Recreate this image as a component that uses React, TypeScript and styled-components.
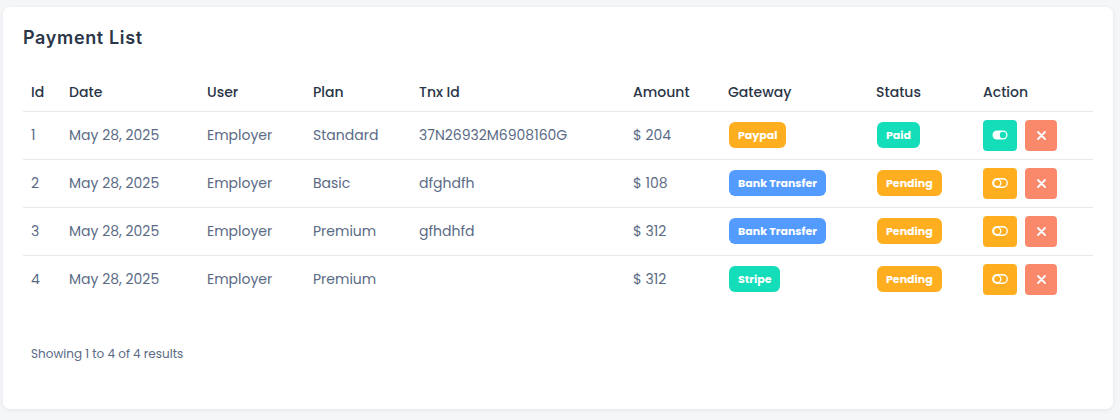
import React from "react";
import styled, { createGlobalStyle } from "styled-components";

const Global = createGlobalStyle`
  html, body { margin: 0; padding: 0; background: #f5f6f8; }
  body { font-family: "Poppins", "Inter", "Noto Sans", sans-serif; }
  * { box-sizing: border-box; }
`;

const Page = styled.div`
  padding: 7px 7px 11px 3px;
`;

const Card = styled.section`
  background: #ffffff;
  border-radius: 7px;
  box-shadow: 0 1px 4px rgba(30, 40, 60, 0.08);
  padding: 17px 20px 46px 20px;
`;

const Title = styled.h2`
  margin: 0 0 21px 0;
  font-family: "Inter", "Noto Sans", sans-serif;
  font-size: 18px;
  line-height: 28px;
  font-weight: 600;
  color: #2a3547;
  letter-spacing: 0.65px;
`;

const Table = styled.table`
  width: 100%;
  border-collapse: collapse;
  table-layout: fixed;
`;

const Col = styled.col<{ $w: number }>`
  width: ${(p) => p.$w}px;
`;

const Th = styled.th`
  text-align: left;
  font-size: 14px;
  font-weight: 500;
  color: #2a3547;
  height: 38px;
  padding: 2px 8px 0 8px;
  border-bottom: 1px solid #e5eaef;
  white-space: nowrap;
`;

const Row = styled.tr<{ $last?: boolean }>`
  & > td {
    border-bottom: ${(p) => (p.$last ? "none" : "1px solid #e5eaef")};
  }
`;

const Td = styled.td`
  height: 48px;
  padding: 1px 8px 0 8px;
  font-size: 14px;
  font-weight: 400;
  color: #5a6a85;
  white-space: nowrap;
  vertical-align: middle;
`;

const BadgeCell = styled(Td)`
  padding: 0 8px 0 9px;
`;

const ActionCell = styled(Td)`
  padding: 0 8px;
`;

const Badge = styled.span<{ $bg: string }>`
  display: inline-flex;
  align-items: center;
  height: 26px;
  padding: 0 9px;
  border-radius: 6px;
  background: ${(p) => p.$bg};
  color: #ffffff;
  font-size: 11px;
  font-weight: 700;
`;

const Actions = styled.div`
  display: flex;
  gap: 8px;
  align-items: center;
`;

const ActionButton = styled.button<{ $bg: string; $w: number }>`
  display: inline-flex;
  align-items: center;
  justify-content: center;
  width: ${(p) => p.$w}px;
  height: 31px;
  border: none;
  border-radius: 4px;
  background: ${(p) => p.$bg};
  padding: 0;
  cursor: pointer;
`;

const Footer = styled.div`
  margin-top: 42px;
  padding-left: 8px;
  font-size: 12px;
  line-height: 18px;
  color: #5a6a85;
`;

const COLORS = {
  orange: "#ffae1f",
  teal: "#13deb9",
  blue: "#539bff",
  coral: "#fa896b",
};

const ToggleOn = () => (
  <svg width="16" height="10" viewBox="0 0 16 10">
    <rect x="0.5" y="0.5" width="15" height="9" rx="4.5" fill="#fff" />
    <circle cx="11" cy="5" r="3.2" fill={COLORS.teal} />
  </svg>
);

const ToggleOff = () => (
  <svg width="16" height="10" viewBox="0 0 16 10" fill="none">
    <rect x="0.75" y="0.75" width="14.5" height="8.5" rx="4.25" stroke="#fff" strokeWidth="1.3" />
    <circle cx="5.2" cy="5" r="3.6" stroke="#fff" strokeWidth="1.3" />
  </svg>
);

const XIcon = () => (
  <svg width="9" height="9" viewBox="0 0 9 9">
    <path d="M1 1 L8 8 M8 1 L1 8" stroke="#fff" strokeWidth="1.8" strokeLinecap="round" />
  </svg>
);

type Payment = {
  id: number;
  date: string;
  user: string;
  plan: string;
  tnx: string;
  amount: string;
  gateway: string;
  gatewayColor: string;
  status: "Paid" | "Pending";
};

const payments: Payment[] = [
  { id: 1, date: "May 28, 2025", user: "Employer", plan: "Standard", tnx: "37N26932M6908160G", amount: "$ 204", gateway: "Paypal", gatewayColor: COLORS.orange, status: "Paid" },
  { id: 2, date: "May 28, 2025", user: "Employer", plan: "Basic", tnx: "dfghdfh", amount: "$ 108", gateway: "Bank Transfer", gatewayColor: COLORS.blue, status: "Pending" },
  { id: 3, date: "May 28, 2025", user: "Employer", plan: "Premium", tnx: "gfhdhfd", amount: "$ 312", gateway: "Bank Transfer", gatewayColor: COLORS.blue, status: "Pending" },
  { id: 4, date: "May 28, 2025", user: "Employer", plan: "Premium", tnx: "", amount: "$ 312", gateway: "Stripe", gatewayColor: COLORS.teal, status: "Pending" },
];

const columns = [
  { label: "Id", w: 38 },
  { label: "Date", w: 138 },
  { label: "User", w: 106 },
  { label: "Plan", w: 106 },
  { label: "Tnx Id", w: 214 },
  { label: "Amount", w: 95 },
  { label: "Gateway", w: 148 },
  { label: "Status", w: 107 },
  { label: "Action", w: 118 },
];

export default function App() {
  return (
    <Page>
      <Global />
      <Card>
        <Title>Payment List</Title>
        <Table>
          <colgroup>
            {columns.map((c) => (
              <Col key={c.label} $w={c.w} />
            ))}
          </colgroup>
          <thead>
            <tr>
              {columns.map((c) => (
                <Th key={c.label}>{c.label}</Th>
              ))}
            </tr>
          </thead>
          <tbody>
            {payments.map((p, i) => (
              <Row key={p.id} $last={i === payments.length - 1}>
                <Td>{p.id}</Td>
                <Td>{p.date}</Td>
                <Td>{p.user}</Td>
                <Td>{p.plan}</Td>
                <Td>{p.tnx}</Td>
                <Td>{p.amount}</Td>
                <BadgeCell>
                  <Badge $bg={p.gatewayColor}>{p.gateway}</Badge>
                </BadgeCell>
                <BadgeCell>
                  <Badge $bg={p.status === "Paid" ? COLORS.teal : COLORS.orange}>{p.status}</Badge>
                </BadgeCell>
                <ActionCell>
                  <Actions>
                    <ActionButton
                      $w={34}
                      $bg={p.status === "Paid" ? COLORS.teal : COLORS.orange}
                      aria-label="Toggle status"
                    >
                      {p.status === "Paid" ? <ToggleOn /> : <ToggleOff />}
                    </ActionButton>
                    <ActionButton $w={32} $bg={COLORS.coral} aria-label="Delete">
                      <XIcon />
                    </ActionButton>
                  </Actions>
                </ActionCell>
              </Row>
            ))}
          </tbody>
        </Table>
        <Footer>Showing 1 to 4 of 4 results</Footer>
      </Card>
    </Page>
  );
}
